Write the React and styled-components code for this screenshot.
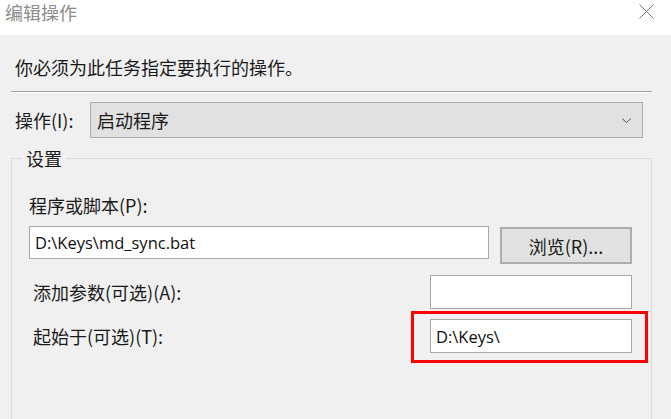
import React from "react";
import styled, { createGlobalStyle } from "styled-components";

const GlobalStyle = createGlobalStyle`
  html, body {
    margin: 0;
    padding: 0;
    background: #f0f0f0;
    overflow: hidden;
  }
  body {
    font-family: "Noto Sans CJK SC", "Noto Sans", sans-serif;
    color: #1a1a1a;
  }
`;

const Dialog = styled.div`
  width: 671px;
  height: 419px;
  background: #f0f0f0;
  display: flex;
  flex-direction: column;
  overflow: hidden;
`;

const TitleBar = styled.div`
  height: 35px;
  flex-shrink: 0;
  background: #fff;
  display: flex;
  align-items: flex-start;
  justify-content: space-between;
  padding: 0 17px 0 5px;
`;

const Title = styled.div`
  font-size: 18px;
  line-height: 24px;
  color: #8c8c8c;
`;

const CloseBtn = styled.svg`
  margin-top: 4px;
  width: 15px;
  height: 15px;
`;

const Body = styled.div`
  flex: 1;
  min-height: 0;
  padding: 0 19px 0 11px;
  display: flex;
  flex-direction: column;
`;

const Instruction = styled.div`
  font-size: 18px;
  line-height: 24px;
  padding: 20px 0 0 4px;
`;

const Separator = styled.div`
  margin-top: 12px;
  height: 1px;
  background: #a0a0a0;
  border-bottom: 1px solid #fff;
`;

const ActionRow = styled.div`
  margin-top: 9px;
  display: flex;
  align-items: center;
  padding-left: 4px;
`;

const Label = styled.span`
  font-size: 18px;
  line-height: 24px;
  width: ${(p) => p.$width || "auto"};
  flex-shrink: 0;
`;

const Select = styled.div`
  width: 553px;
  height: 36px;
  box-sizing: border-box;
  background: #e1e1e1;
  border: 1px solid #adadad;
  display: flex;
  align-items: center;
  justify-content: space-between;
  padding: 0 10px 0 6px;
  font-size: 18px;
`;

const Group = styled.fieldset`
  flex: 1;
  margin: 9px 0 0;
  padding: 0;
  border: 1px solid #dcdcdc;
  border-bottom: none;
  min-width: 0;
`;

const Legend = styled.legend`
  margin-left: 10px;
  padding: 0 4px;
  font-size: 18px;
  line-height: 22px;
`;

const GroupInner = styled.div`
  padding: 24px 18px 0 17px;
  display: flex;
  flex-direction: column;
`;

const ProgramRow = styled.div`
  margin-top: 9px;
  display: flex;
  align-items: flex-start;
  gap: 11px;
`;

const Field = styled.div`
  width: ${(p) => p.$width};
  height: ${(p) => p.$height || "34px"};
  box-sizing: border-box;
  background: #fff;
  border: 1px solid #a8a8a8;
  display: flex;
  align-items: center;
  padding-left: 5px;
  font-size: 16.5px;
  font-family: "Open Sans", "Noto Sans CJK SC", sans-serif;
  color: #111;
`;

const Button = styled.div`
  width: 132px;
  height: 37px;
  box-sizing: border-box;
  background: #e1e1e1;
  border: 2px solid #adadad;
  display: flex;
  align-items: center;
  justify-content: center;
  font-size: 18px;
  margin-top: 1px;
`;

const OptRow = styled.div`
  margin-top: ${(p) => p.$top};
  display: flex;
  align-items: center;
  justify-content: space-between;
  padding-right: 1px;
  margin-left: 4px;
  position: relative;
`;

const Highlight = styled.div`
  position: absolute;
  right: -15px;
  top: -8px;
  width: 237px;
  height: 52px;
  box-sizing: border-box;
  border: 3px solid #ff0000;
  pointer-events: none;
`;

const Chevron = () => (
  <svg width="11" height="7" viewBox="0 0 11 7">
    <path d="M1 1.5 L5.5 5.5 L10 1.5" fill="none" stroke="#555" strokeWidth="1" />
  </svg>
);

export default function App() {
  return (
    <>
      <GlobalStyle />
      <Dialog>
        <TitleBar>
          <Title>编辑操作</Title>
          <CloseBtn viewBox="0 0 15 15">
            <path d="M0.5 0.5 L14.5 14.5 M14.5 0.5 L0.5 14.5" stroke="#777" strokeWidth="1" />
          </CloseBtn>
        </TitleBar>
        <Body>
          <Instruction>你必须为此任务指定要执行的操作。</Instruction>
          <Separator />
          <ActionRow>
            <Label $width="75px">操作(I):</Label>
            <Select>
              <span>启动程序</span>
              <Chevron />
            </Select>
          </ActionRow>
          <Group>
            <Legend>设置</Legend>
            <GroupInner>
              <Label>程序或脚本(P):</Label>
              <ProgramRow>
                <Field $width="460px" $height="33px">D:\Keys\md_sync.bat</Field>
                <Button>浏览(R)...</Button>
              </ProgramRow>
              <OptRow $top="11px">
                <Label>添加参数(可选)(A):</Label>
                <Field $width="202px" />
              </OptRow>
              <OptRow $top="10px">
                <Label>起始于(可选)(T):</Label>
                <Field $width="202px">D:\Keys\</Field>
                <Highlight />
              </OptRow>
            </GroupInner>
          </Group>
        </Body>
      </Dialog>
    </>
  );
}
